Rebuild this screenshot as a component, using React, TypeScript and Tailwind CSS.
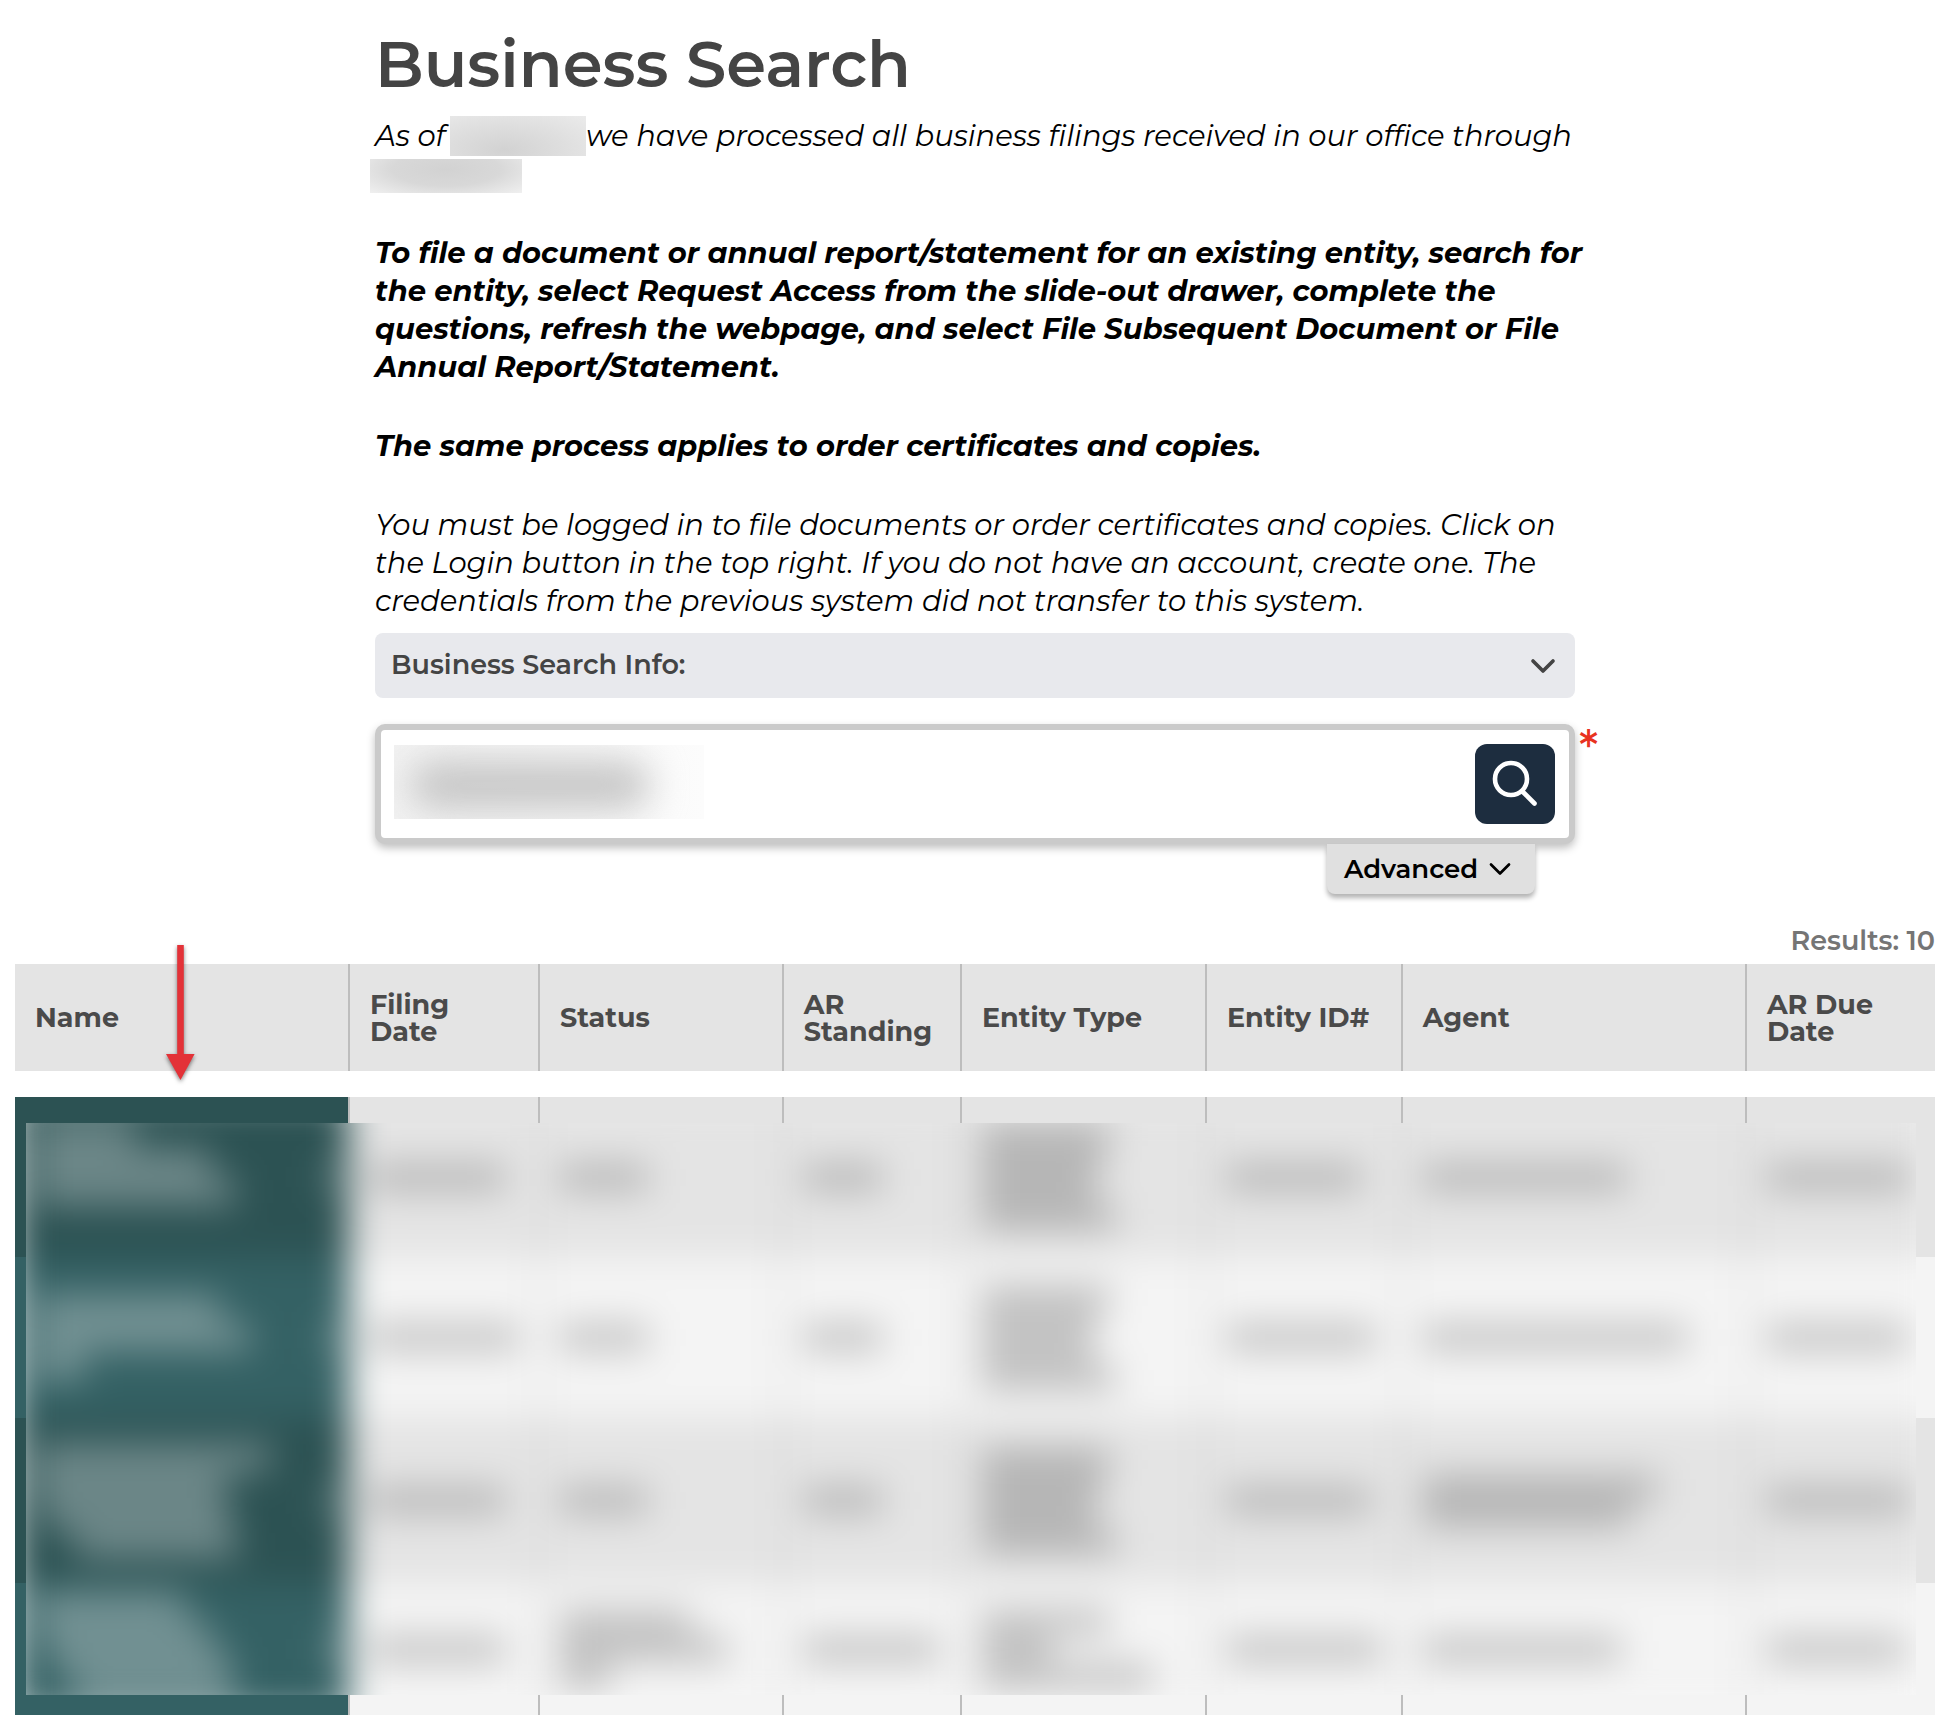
import { ChevronDown } from "lucide-react"

// one hidden line of text: [indent, width]
type Line = [number, number]

interface Row {
  height: string
  nameBg: string
  rowBg: string
  name: Line[]
  cells: Line[][]
}

const columns = [
  { label: "Name", width: "w-[17.34%]" },
  { label: "Filing Date", width: "w-[9.9%]" },
  { label: "Status", width: "w-[12.7%]" },
  { label: "AR Standing", width: "w-[9.28%]" },
  { label: "Entity Type", width: "w-[12.76%]" },
  { label: "Entity ID#", width: "w-[10.2%]" },
  { label: "Agent", width: "w-[17.92%]" },
  { label: "AR Due Date", width: "w-[9.9%]" },
]

const rows: Row[] = [
  {
    height: "h-[160px]",
    nameBg: "bg-[#2c5253]",
    rowBg: "bg-[#e4e4e4]",
    name: [[0, 100], [0, 175], [0, 200], [0, 0]],
    cells: [[[0, 135]], [[0, 88]], [[0, 78]], [[0, 128], [0, 120], [0, 112], [0, 134]], [[0, 134]], [[0, 204]], [[0, 142]]],
  },
  {
    height: "h-[161px]",
    nameBg: "bg-[#346164]",
    rowBg: "bg-[#f4f4f4]",
    name: [[0, 185], [0, 216], [0, 50]],
    cells: [[[0, 148]], [[0, 88]], [[0, 78]], [[0, 128], [0, 114], [0, 110], [0, 134]], [[0, 148]], [[0, 264]], [[0, 140]]],
  },
  {
    height: "h-[165px]",
    nameBg: "bg-[#2c5253]",
    rowBg: "bg-[#e4e4e4]",
    name: [[0, 235], [0, 190], [10, 185], [40, 162]],
    cells: [[[0, 135]], [[0, 88]], [[0, 78]], [[0, 128], [0, 120], [0, 112], [0, 134]], [[0, 144]], [[0, 235], [0, 208]], [[0, 142]]],
  },
  {
    height: "h-[132px]",
    nameBg: "bg-[#346164]",
    rowBg: "bg-[#f4f4f4]",
    name: [[0, 150], [5, 170], [20, 175], [40, 160]],
    cells: [[[0, 135]], [[0, 130], [0, 168], [0, 50]], [[0, 134]], [[0, 127], [0, 70], [0, 170]], [[0, 155]], [[0, 198]], [[0, 138]]],
  },
]

function Lines({ lines, bar }: { lines: Line[]; bar: string }) {
  return (
    <div>
      {lines.map(([indent, width], i) => (
        <div key={i} className={bar} style={{ marginLeft: indent, width }} />
      ))}
    </div>
  )
}

function Columns() {
  return (
    <colgroup>
      {columns.map((col) => (
        <col key={col.label} className={col.width} />
      ))}
    </colgroup>
  )
}

function ResultRows({ filled = false }: { filled?: boolean }) {
  return (
    <>
      {rows.map((row, i) => (
        <tr key={i} className={`${row.height} ${row.rowBg}`}>
          <td className={`${row.nameBg} p-0 pl-5`}>
            {filled && (
              <div className="flex items-center justify-between pr-3">
                <Lines lines={row.name} bar="h-[29px] bg-white/30" />
                <div className="h-7 w-3 bg-white/30" />
              </div>
            )}
          </td>
          {row.cells.map((lines, j) => (
            <td key={j} className="border-l-2 border-[#bdbdbd] p-0 pl-5">
              {filled && <Lines lines={lines} bar="h-[27px] bg-black/20" />}
            </td>
          ))}
        </tr>
      ))}
    </>
  )
}

function SearchIcon() {
  return (
    <svg viewBox="0 0 80 80" className="size-20" fill="none" stroke="white" strokeLinecap="round">
      <circle cx="36" cy="35" r="16" strokeWidth="4.6" />
      <path d="M47.5 47.5 59.5 59.5" strokeWidth="4.6" />
    </svg>
  )
}

function Arrow() {
  return (
    <svg
      viewBox="0 0 40 150"
      className="pointer-events-none absolute -top-5 left-[145px] h-[150px] w-10 drop-shadow-[0_2px_2px_rgba(0,0,0,0.5)]"
      fill="#e33238"
    >
      <path d="M17.2 1h6.6v109H34.6L20.5 136 6 110H17.2z" />
    </svg>
  )
}

export default function App() {
  return (
    <div className="bg-white pt-6 pr-[19px] pb-2 pl-[15px] font-['Montserrat',Inter,sans-serif] text-black">
      <main className="mx-auto max-w-[1200px]">
        <h1 className="text-[64px] leading-[80px] font-semibold text-[#444444]">Business Search</h1>

        <div className="mt-[13px] flex flex-col gap-[41px] text-[29px] leading-[38px] whitespace-nowrap italic">
          <p>
            As of{" "}
            <span className="-my-px -ml-[3px] inline-block h-10 w-[136px] bg-[radial-gradient(ellipse_at_40%_85%,#d2d2d2,#dedede_50%,#ebebeb)] align-bottom" />
            we have processed all business filings received in our office through
            <br />
            <span className="-ml-[5px] inline-block h-[34px] w-[152px] bg-[radial-gradient(ellipse_at_50%_30%,#d2d2d2,#d8d8d8_50%,#f0f0f0)] align-bottom" />
          </p>
          <p className="font-bold">
            To file a document or annual report/statement for an existing entity, search for
            <br />
            the entity, select Request Access from the slide-out drawer, complete the
            <br />
            questions, refresh the webpage, and select File Subsequent Document or File
            <br />
            Annual Report/Statement.
          </p>
          <p className="font-bold">The same process applies to order certificates and copies.</p>
          <p>
            You must be logged in to file documents or order certificates and copies. Click on
            <br />
            the Login button in the top right. If you do not have an account, create one. The
            <br />
            credentials from the previous system did not transfer to this system.
          </p>
        </div>

        <button
          type="button"
          className="mt-[13px] flex h-[65px] w-full items-center justify-between rounded-lg bg-[#e8e9ed] pr-3 pl-4 text-[27px] font-semibold text-[#444444]"
        >
          Business Search Info:
          <ChevronDown className="size-10" strokeWidth={2.2} />
        </button>

        <form className="relative mt-[26px]" onSubmit={(e) => e.preventDefault()}>
          <div className="relative flex h-[120px] items-center rounded-[10px] border-[6px] border-[#cacaca] bg-white pr-3.5 shadow-[0_4px_8px_rgba(0,0,0,0.25)]">
            <input id="search" type="text" className="h-full min-w-0 flex-1 px-5 text-3xl outline-none" />
            <button type="submit" aria-label="Search" className="size-20 rounded-xl bg-[#1d2d3f]">
              <SearchIcon />
            </button>
            <div className="pointer-events-none absolute top-[15px] left-[13px] h-[74px] w-[310px] overflow-hidden bg-linear-to-r from-[#f2f2f2] to-[#fcfcfc]">
              <div className="mt-4 ml-4 h-12 w-60 rounded-full bg-[#c6c6c6] blur-[18px]" />
            </div>
          </div>
          <label htmlFor="search" className="absolute top-0 left-full pl-1 text-[48px] leading-[48px] font-medium text-[#e8321f]">
            *
          </label>
        </form>

        <div className="relative flex justify-end pr-10">
          <button
            type="button"
            className="flex h-[50px] w-[208px] items-center justify-center gap-1 rounded-b-lg bg-[#e0e0e0] text-[26px] font-semibold shadow-[0_4px_5px_rgba(0,0,0,0.3)]"
          >
            Advanced
            <ChevronDown className="size-9" strokeWidth={1.8} />
          </button>
        </div>
      </main>

      <p className="mt-[31px] mb-[7px] text-right text-[27px] leading-8 font-semibold text-[#757575]">Results: 10</p>

      <div className="relative">
        <table className="w-full table-fixed border-separate border-spacing-0 text-left text-[27px] leading-[27px] text-[#4a4a4a]">
          <Columns />
          <thead>
            <tr className="h-[107px] bg-[#e4e4e4]">
              {columns.map((col) => (
                <th key={col.label} scope="col" className="border-l-2 border-[#bdbdbd] px-5 font-bold first:border-l-0">
                  {col.label}
                </th>
              ))}
            </tr>
          </thead>
          <tbody className="before:block before:h-[26px] before:content-['']">
            <ResultRows />
          </tbody>
        </table>

        {/* blurred rows, cropped a little inside the table body */}
        <div
          aria-hidden="true"
          className="absolute top-[159px] right-[19px] bottom-5 left-[11px] overflow-hidden bg-white"
        >
          <div className="absolute -top-[26px] -right-[19px] -left-[11px] blur-[18px]">
            <table className="w-full table-fixed border-separate border-spacing-0">
              <Columns />
              <tbody>
                <ResultRows filled />
              </tbody>
            </table>
          </div>
        </div>

        <Arrow />
      </div>
    </div>
  )
}
